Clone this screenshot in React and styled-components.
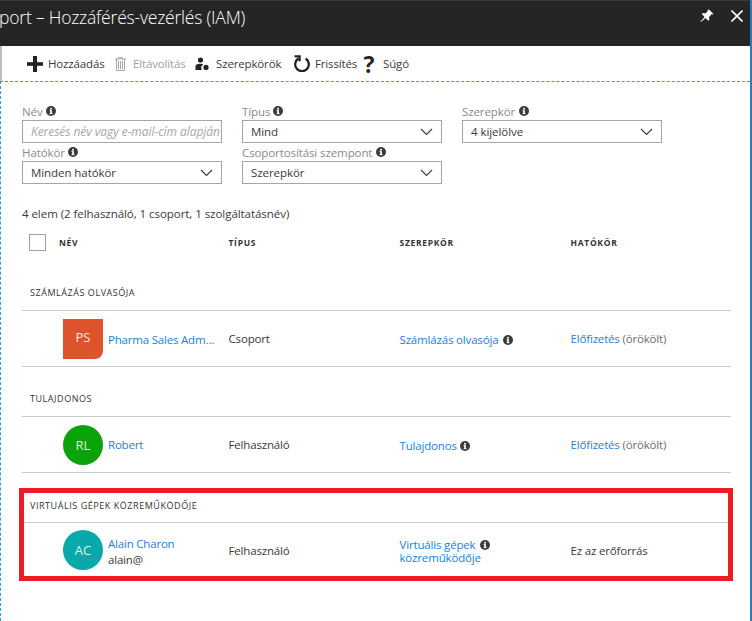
import React from "react";
import styled, { createGlobalStyle } from "styled-components";

const Global = createGlobalStyle`
  html, body { margin: 0; padding: 0; background: #fff; }
  body { font-family: "Open Sans", "Noto Sans", sans-serif; font-size: 12px; color: #3a3a3a; }
  * { box-sizing: border-box; }
`;

const Page = styled.div`
  width: 752px; height: 621px; overflow: hidden; display: flex; flex-direction: column; background: #fff;
  border-right: 2px solid #2a7cc7;
`;
const Header = styled.header`
  height: 46px; flex: none; background: #252525; border-top: 1px solid #3a3a3a; color: #fff;
  display: flex; align-items: flex-start; justify-content: space-between;
`;
const Title = styled.h1`
  margin: 3px 0 0 -1px; font-size: 17.5px; font-weight: 300; line-height: 26px; letter-spacing: -0.2px; white-space: nowrap;
`;
const HeaderIcons = styled.div`
  display: flex; align-items: center; gap: 17px; padding: 8px 7px 0 0;
`;
const Main = styled.div`
  flex: 1; min-height: 0; display: flex; flex-direction: column;
`;
const Toolbar = styled.div`
  height: 35px; flex: none; display: flex; align-items: center; padding-left: 27px; border-left: 2px solid #bdbdbd;
`;
const ToolbarInner = styled.div`
  display: flex; align-items: center; margin-left: -2px; height: 100%;
`;
const Tool = styled.span`
  display: flex; align-items: center; margin-right: ${p => p.$after}px; gap: ${p => p.$gap}px;
  color: ${p => (p.$disabled ? "#a0a0a0" : "#3a3a3a")}; white-space: nowrap; font-size: 11.5px; letter-spacing: -0.15px;
`;
const ToolText = styled.span`
  display: block; width: ${p => p.$w}px;
`;
const QuestionGlyph = styled.span`
  font-size: 23px; font-weight: 700; color: #252525; line-height: 20px; width: 12px; display: flex; justify-content: center;
  font-family: "Open Sans", sans-serif;
`;
const Content = styled.div`
  flex: 1; min-height: 0; border-top: 1px dashed #1ea5dd; border-left: 1px dashed #1ea5dd; padding: 20px 19px 0 21px;
`;
const Filters = styled.div`
  display: grid; grid-template-columns: repeat(3, 200px); column-gap: 20px; row-gap: 0;
`;
const Field = styled.div`
  display: flex; flex-direction: column; height: 41px;
`;
const Label = styled.label`
  height: 18px; display: flex; align-items: center; gap: ${p => p.$gap || 3}px; color: #8a8a8a; font-size: 11.5px; letter-spacing: -0.1px; white-space: nowrap;
`;
const Box = styled.div`
  height: 23px; border: 1px solid #a6a6a6; display: flex; align-items: center; justify-content: space-between;
  padding: 0 8px; font-size: 11.5px; letter-spacing: -0.07px; color: #3a3a3a; background: #fff; overflow: hidden; white-space: nowrap;
`;
const Placeholder = styled.span`
  font-style: italic; color: #a6a6a6; font-size: 12px; letter-spacing: -0.05px;
`;
const Count = styled.div`
  margin-top: 21px; height: 18px; line-height: 18px; font-size: 11.5px; letter-spacing: -0.05px; color: #3a3a3a;
`;
const Columns = `display: grid; grid-template-columns: 206.5px 171px 171px 160px;`;
const TableHead = styled.div`
  ${Columns} margin-top: 11px; height: 17px; align-items: center;
`;
const HeadCell = styled.div`
  font-size: 8.5px; font-weight: 700; letter-spacing: 0.7px; color: #333; text-transform: uppercase;
`;
const NameHead = styled(HeadCell)`
  display: flex; align-items: center; gap: 13px; padding-left: 7px;
`;
const Check = styled.span`
  width: 17px; height: 17px; border: 1px solid #a0a0a0; display: block; flex: none;
`;
const Group = styled.section`
  margin-top: ${p => p.$top}px;
  ${p => p.$highlight && `border: 5px solid #ed1c24; margin-left: -3px; margin-right: -2px;`}
`;
const GroupTitle = styled.div`
  height: ${p => p.$h}px; border-bottom: 1px solid #cacaca; display: flex; align-items: center;
  padding: 0 0 ${p => p.$pb || 0}px ${p => p.$pl}px; font-size: 9px; letter-spacing: 0.55px; color: #333; text-transform: uppercase;
`;
const Row = styled.div`
  ${Columns} height: ${p => p.$h}px; align-items: center; border-bottom: ${p => (p.$plain ? "0" : "1px solid #cacaca")};
  ${p => p.$plain && `margin-left: -2px;`}
`;
const NameCell = styled.div`
  display: flex; align-items: center; gap: 5px; padding-left: 41px; min-width: 0;
`;
const Avatar = styled.div`
  width: 40px; height: 40px; flex: none; display: flex; align-items: center; justify-content: center;
  background: ${p => p.$bg}; color: rgba(255,255,255,.88); font-size: 13px; padding-bottom: ${p => p.$pb || 0}px;
  border-radius: ${p => (p.$square ? "0 0 8px 0" : "50%")};
`;
const NameStack = styled.div`
  display: flex; flex-direction: column; min-width: 0; line-height: 16px; width: 108px; padding-top: ${p => p.$pt || 0}px;
`;
const NameLink = styled.a`
  color: #1a7fd6; font-size: 11.5px; letter-spacing: -0.2px; overflow: hidden; text-overflow: ellipsis; white-space: nowrap;
`;
const Sub = styled.span`
  font-size: 11.5px; color: #3a3a3a; letter-spacing: -0.2px;
`;
const Cell = styled.div`
  font-size: 11.5px; letter-spacing: -0.17px; color: #3a3a3a; line-height: 13px; white-space: nowrap; padding-top: ${p => p.$pt || 0}px;
`;
const Link = styled.a`
  color: #1a7fd6;
`;
const Muted = styled.span`
  color: #6e6e6e;
`;
const InfoWrap = styled.span`
  display: inline-flex; vertical-align: -1px; margin-left: ${p => p.$ml ?? 5}px;
`;

const Info = ({ ml, size = 10 }) => (
  <InfoWrap $ml={ml}>
    <svg width={size} height={size} viewBox="0 0 10 10">
      <circle cx="5" cy="5" r="5" fill="#3c3c3c" />
      <rect x="4.2" y="4.2" width="1.7" height="3.8" fill="#fff" />
      <rect x="3.5" y="4.2" width="1.5" height="0.8" fill="#fff" />
      <rect x="3.5" y="7.3" width="3.1" height="0.8" fill="#fff" />
      <circle cx="5" cy="2.7" r="1" fill="#fff" />
    </svg>
  </InfoWrap>
);
const Chevron = () => (
  <svg width="13" height="7" viewBox="0 0 13 7" fill="none" stroke="#3a3a3a" strokeWidth="1.1"><path d="M1 1l5.5 5.5L12 1" /></svg>
);
const Plus = () => (
  <svg width="16" height="16" viewBox="0 0 16 16" fill="#222"><rect x="6" y="0" width="4" height="16" /><rect x="0" y="6.2" width="16" height="3.6" /></svg>
);
const Trash = () => (
  <svg width="11" height="14" viewBox="0 0 11 14" fill="none" stroke="#a6a6a6"><path d="M0 2h11M3.5 2V.5h4V2M1.5 2v11.5h8V2M3.5 4v8M5.5 4v8M7.5 4v8" /></svg>
);
const Roles = () => (
  <svg width="14" height="14" viewBox="0 0 14 14" fill="#222">
    <circle cx="5.5" cy="3" r="2.6" />
    <path d="M.5 13V10c0-2 1.2-3.2 5-3.2 1.3 0 2.3.2 3 .6A3.5 3.5 0 0 0 7 13z" />
    <circle cx="11" cy="10.4" r="2.6" />
  </svg>
);
const Refresh = () => (
  <svg width="16" height="17" viewBox="0 0 16 17" fill="none" stroke="#222" strokeWidth="2.3">
    <path d="M4.4 3.6A6.8 6.8 0 1 0 11.6 3.6" />
    <path d="M.6 1.3h5V6.2" />
  </svg>
);
const Pin = () => (
  <svg width="14" height="14" viewBox="0 0 14 14" fill="#fff">
    <path d="M9 .5l4.5 4.5-1 .6-1-.4L9 8.2l.3 2.6-1 1-2.8-2.9L1 13l-.5-.5 4.1-4.6L1.8 5l1-1 2.6.4 2.5-2.4-.4-1z" />
  </svg>
);
const Close = () => (
  <svg width="12" height="12" viewBox="0 0 12 12" stroke="#fff" strokeWidth="1.6"><path d="M.5.5l11 11M11.5.5l-11 11" /></svg>
);

export default function App() {
  return (
    <Page>
      <Global />
      <Header>
        <Title>port – Hozzáférés-vezérlés (IAM)</Title>
        <HeaderIcons><Pin /><Close /></HeaderIcons>
      </Header>
      <Main>
        <Toolbar>
          <ToolbarInner>
            <Tool $gap={5} $after={10}><Plus /><ToolText $w={57}>Hozzáadás</ToolText></Tool>
            <Tool $gap={7} $after={10} $disabled><Trash /><ToolText $w={52}>Eltávolítás</ToolText></Tool>
            <Tool $gap={7} $after={13}><Roles /><ToolText $w={65}>Szerepkörök</ToolText></Tool>
            <Tool $gap={5} $after={8}><Refresh /><ToolText $w={40}>Frissítés</ToolText></Tool>
            <Tool $gap={8} $after={0}><QuestionGlyph>?</QuestionGlyph><ToolText $w={27}>Súgó</ToolText></Tool>
          </ToolbarInner>
        </Toolbar>
        <Content>
          <Filters>
            <Field><Label>Név<Info ml={0} /></Label><Box><Placeholder>Keresés név vagy e-mail-cím alapján</Placeholder></Box></Field>
            <Field><Label>Típus<Info ml={0} /></Label><Box>Mind<Chevron /></Box></Field>
            <Field><Label $gap={4}>Szerepkör<Info ml={0} /></Label><Box>4 kijelölve<Chevron /></Box></Field>
            <Field><Label>Hatókör<Info ml={0} /></Label><Box>Minden hatókör<Chevron /></Box></Field>
            <Field><Label $gap={4}>Csoportosítási szempont<Info ml={0} /></Label><Box>Szerepkör<Chevron /></Box></Field>
          </Filters>
          <Count>4 elem (2 felhasználó, 1 csoport, 1 szolgáltatásnév)</Count>
          <TableHead>
            <NameHead><Check />Név</NameHead>
            <HeadCell>Típus</HeadCell>
            <HeadCell>Szerepkör</HeadCell>
            <HeadCell>Hatókör</HeadCell>
          </TableHead>
          <Group $top={24}>
            <GroupTitle $h={36} $pl={8}>Számlázás olvasója</GroupTitle>
            <Row $h={56}>
              <NameCell>
                <Avatar $bg="#dd542c" $square $pb={4}>PS</Avatar>
                <NameStack $pt={2}><NameLink>Pharma Sales Administrators</NameLink></NameStack>
              </NameCell>
              <Cell>Csoport</Cell>
              <Cell $pt={2}><Link>Számlázás olvasója</Link><Info /></Cell>
              <Cell><Link>Előfizetés</Link> <Muted>(örökölt)</Muted></Cell>
            </Row>
          </Group>
          <Group $top={14}>
            <GroupTitle $h={36} $pl={8}>Tulajdonos</GroupTitle>
            <Row $h={56}>
              <NameCell>
                <Avatar $bg="#0ba20a">RL</Avatar>
                <NameStack><NameLink>Robert</NameLink></NameStack>
              </NameCell>
              <Cell>Felhasználó</Cell>
              <Cell $pt={2}><Link>Tulajdonos</Link><Info ml={3} /></Cell>
              <Cell><Link>Előfizetés</Link> <Muted>(örökölt)</Muted></Cell>
            </Row>
          </Group>
          <Group $top={15} $highlight>
            <GroupTitle $h={30} $pl={6} $pb={5}>Virtuális gépek közreműködője</GroupTitle>
            <Row $h={53} $plain>
              <NameCell>
                <Avatar $bg="#0aa9a9">AC</Avatar>
                <NameStack $pt={4}><NameLink>Alain Charon</NameLink><Sub>alain@</Sub></NameStack>
              </NameCell>
              <Cell $pt={2}>Felhasználó</Cell>
              <Cell $pt={2}><Link>Virtuális gépek</Link><Info ml={5} /><br /><Link>közreműködője</Link></Cell>
              <Cell $pt={2}>Ez az erőforrás</Cell>
            </Row>
          </Group>
        </Content>
      </Main>
    </Page>
  );
}
